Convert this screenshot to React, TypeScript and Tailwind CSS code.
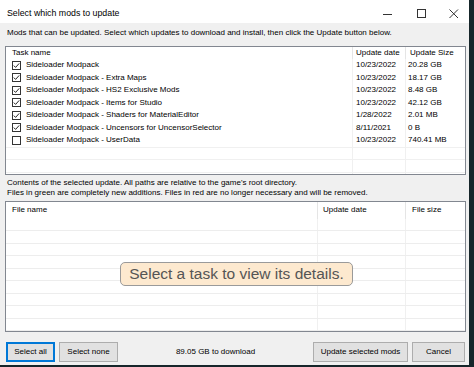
import React from "react";

const FONT = '"Liberation Sans", Arial, sans-serif';

type Row = { name: string; date: string; size: string; checked: boolean };

const rows: Row[] = [
  { name: "Sideloader Modpack", date: "10/23/2022", size: "20.28 GB", checked: true },
  { name: "Sideloader Modpack - Extra Maps", date: "10/23/2022", size: "18.17 GB", checked: true },
  { name: "Sideloader Modpack - HS2 Exclusive Mods", date: "10/23/2022", size: "8.48 GB", checked: true },
  { name: "Sideloader Modpack - Items for Studio", date: "10/23/2022", size: "42.12 GB", checked: true },
  { name: "Sideloader Modpack - Shaders for MaterialEditor", date: "1/28/2022", size: "2.01 MB", checked: true },
  { name: "Sideloader Modpack - Uncensors for UncensorSelector", date: "8/11/2021", size: "0 B", checked: true },
  { name: "Sideloader Modpack - UserData", date: "10/23/2022", size: "740.41 MB", checked: false },
];

function CheckBox({ checked }: { checked: boolean }) {
  return (
    <svg width="9" height="9" viewBox="0 0 9 9" className="shrink-0">
      <rect x="0.5" y="0.5" width="8" height="8" fill="#fff" stroke="#333" strokeWidth="1" />
      {checked && (
        <path d="M1.8 4.6 L3.6 6.4 L7.2 2.4" fill="none" stroke="#222" strokeWidth="1" />
      )}
    </svg>
  );
}

function Button({ children, w, focused }: { children: React.ReactNode; w: string; focused?: boolean }) {
  return (
    <div
      className={`${w} h-[20px] flex items-center justify-center text-[8px] text-black ${
        focused ? "border-2 border-[#0078d7] bg-[#e1e1e1]" : "border border-[#adadad] bg-[#e1e1e1]"
      }`}
    >
      {children}
    </div>
  );
}

export default function App() {
  return (
    <div className="w-[474px] h-[367px] bg-[#16262a] flex overflow-hidden" style={{ fontFamily: FONT }}>
      <div className="w-[469px] h-[365px] bg-[#f0f0f0] flex flex-col">
        {/* Title bar */}
        <div className="h-[23px] bg-white flex items-center pl-[7px] pt-[3px] relative">
          <span className="text-[8.8px] text-black leading-none">Select which mods to update</span>
          <svg width="474" height="23" className="absolute left-0 top-0" viewBox="0 0 474 23">
            <line x1="383" y1="14.5" x2="392" y2="14.5" stroke="#333" strokeWidth="1" />
            <rect x="417.5" y="9.5" width="8" height="8" fill="none" stroke="#333" strokeWidth="1" />
            <path d="M449.5 9.5 L458 18 M458 9.5 L449.5 18" stroke="#333" strokeWidth="1" />
          </svg>
        </div>

        <div className="flex flex-col pl-[5px] pr-[3px]">
          <div className="h-[23px] pt-[5px] pl-[2px] text-[8px] leading-[10px] text-black whitespace-nowrap">
            Mods that can be updated. Select which updates to download and install, then click the Update button below.
          </div>

          {/* Table 1 */}
          <div className="h-[129px] border border-[#828790] bg-white overflow-hidden flex flex-col">
            <div className="h-[12px] flex text-[8px] leading-[12px] text-black shrink-0">
              <div className="w-[347px] pl-[6px] border-r border-[#e5e5e5]">Task name</div>
              <div className="w-[53px] pl-[3px] border-r border-[#e5e5e5]">Update date</div>
              <div className="flex-1 pl-[4px]">Update Size</div>
            </div>
            {rows.map((r) => (
              <div key={r.name} className="h-[12.5px] flex text-[8px] leading-[12.5px] text-black shrink-0">
                <div className="w-[347px] pl-[6px] border-r border-[#f0f0f0] flex items-center gap-[5px]">
                  <CheckBox checked={r.checked} />
                  <span className="whitespace-nowrap">{r.name}</span>
                </div>
                <div className="w-[53px] pl-[3px] border-r border-[#f0f0f0] whitespace-nowrap">{r.date}</div>
                <div className="flex-1 pl-[2px] whitespace-nowrap">{r.size}</div>
              </div>
            ))}
            {[0, 1, 2].map((i) => (
              <div key={i} className="h-[12.5px] flex shrink-0 border-t border-[#f0f0f0]">
                <div className="w-[347px] border-r border-[#f0f0f0]" />
                <div className="w-[53px] border-r border-[#f0f0f0]" />
                <div className="flex-1" />
              </div>
            ))}
          </div>

          <div className="h-[26px] pt-[3px] pl-[2px] text-[8px] leading-[10px] text-black whitespace-nowrap">
            <div>Contents of the selected update. All paths are relative to the game&apos;s root directory.</div>
            <div>Files in green are completely new additions. Files in red are no longer necessary and will be removed.</div>
          </div>

          {/* Table 2 */}
          <div className="h-[131px] border border-[#828790] bg-white overflow-hidden flex flex-col relative">
            <div className="h-[16.5px] flex text-[8px] leading-[16px] text-black shrink-0">
              <div className="w-[312px] pl-[6px] border-r border-[#e5e5e5]">File name</div>
              <div className="w-[88px] pl-[5px] border-r border-[#e5e5e5]">Update date</div>
              <div className="flex-1 pl-[6px]">File size</div>
            </div>
            {Array.from({ length: 10 }).map((_, i) => (
              <div key={i} className="h-[12.5px] flex shrink-0 border-b border-[#ededed]">
                <div className="w-[312px] border-r border-[#f0f0f0]" />
                <div className="w-[88px] border-r border-[#f0f0f0]" />
                <div className="flex-1" />
              </div>
            ))}
            <div className="absolute left-[114px] top-[60px] w-[233px] h-[24px] rounded-[5px] border border-[#9a9a9a] bg-[#fde9cf] flex items-center justify-center">
              <span className="text-[15.5px] leading-none text-[#555]">Select a task to view its details.</span>
            </div>
          </div>

          {/* Footer */}
          <div className="mt-[10px] h-[20px] flex items-center">
            <div className="ml-[1px]">
              <Button w="w-[49px]" focused>
                Select all
              </Button>
            </div>
            <div className="ml-[4px]">
              <Button w="w-[59px]">Select none</Button>
            </div>
            <div className="w-[195px] text-center text-[8px] text-black">89.05 GB to download</div>
            <Button w="w-[95px]">Update selected mods</Button>
            <div className="ml-[4px]">
              <Button w="w-[53px]">Cancel</Button>
            </div>
          </div>
        </div>
      </div>
    </div>
  );
}
